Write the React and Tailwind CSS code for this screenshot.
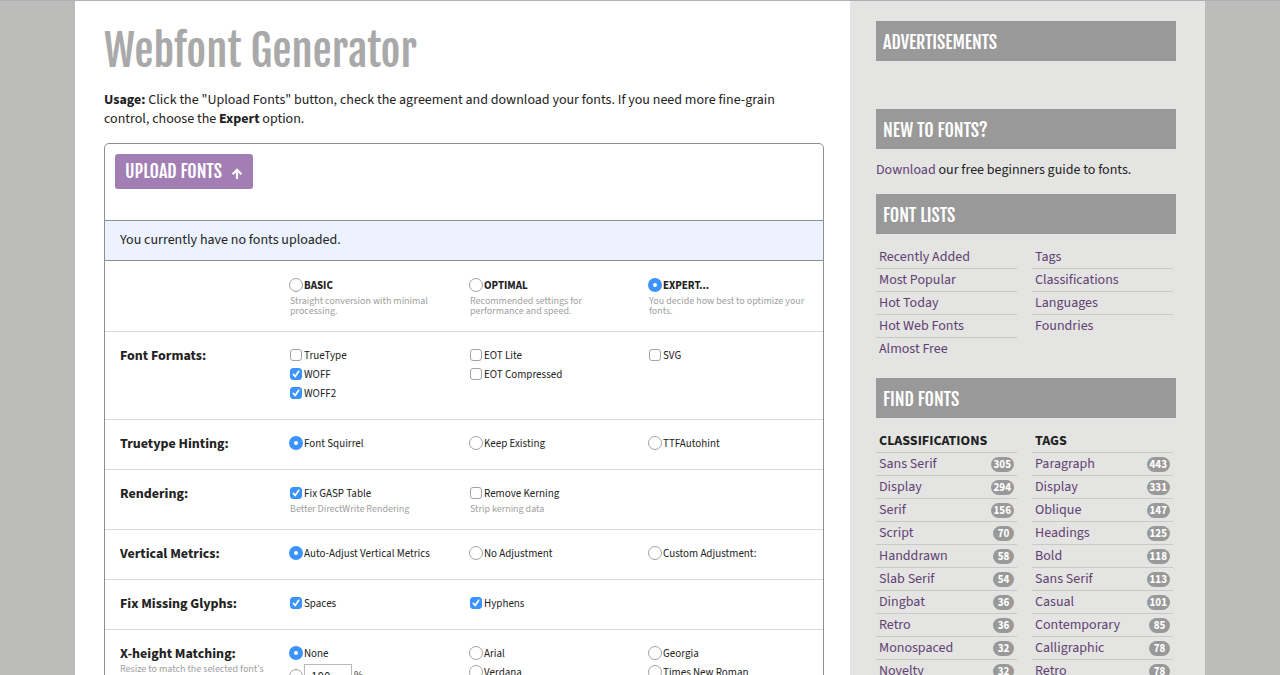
import { useState } from "react";

const control =
  "col-start-1 row-start-1 m-0 appearance-none border border-[#a3a3a3] bg-white checked:border-[#3b94fb]";

function Option({ type = "checkbox", name, label, note, checked = false, strong = false }) {
  return (
    <div>
      <label className="flex h-[19px] items-center">
        <span className="grid w-3.5 shrink-0 place-items-center">
          {type === "radio" ? (
            <input
              type="radio"
              name={name}
              defaultChecked={checked}
              className={`${control} size-3.5 rounded-full checked:border-[5px]`}
            />
          ) : (
            <>
              <input
                type="checkbox"
                name={name}
                defaultChecked={checked}
                className={`${control} peer size-3 rounded-[3px] checked:bg-[#3b94fb]`}
              />
              <svg
                viewBox="0 0 12 12"
                className="pointer-events-none col-start-1 row-start-1 hidden size-3 peer-checked:block"
                fill="none"
                stroke="white"
                strokeWidth="1.7"
                strokeLinecap="round"
                strokeLinejoin="round"
              >
                <path d="M3.4 6.4 5.2 8.5 8.7 3.3" />
              </svg>
            </>
          )}
        </span>
        <span className={strong ? "ml-px pt-[3px] text-[11px] font-bold" : "ml-px pt-[3px] text-[11px]"}>
          {label}
        </span>
      </label>
      {note && <Note className="-mb-0.5 ml-px max-w-[160px]">{note}</Note>}
    </div>
  );
}

function Note({ children, className = "" }) {
  return <p className={`mt-0.5 text-[10px] leading-[10px] text-[#a0a0a0] ${className}`}>{children}</p>;
}

function Row({ title, note, children, first = false }) {
  return (
    <fieldset
      className={`grid grid-cols-[169fr_180fr_179fr_160fr] px-[15px] pb-[17px] ${
        first ? "pt-3.5" : "border-t border-[#d9d9d9] pt-[13px]"
      }`}
    >
      <div>
        {title && <h2 className="h-[19px] pt-0.5 text-[14px] font-bold leading-[19px]">{title}</h2>}
        {note && <Note className="max-w-[150px]">{note}</Note>}
      </div>
      {children}
    </fieldset>
  );
}

function PercentOption() {
  const [value, setValue] = useState("100");
  return (
    <div className="mt-0.5 flex h-6 items-center">
      <input
        type="radio"
        name="xheight"
        aria-label="Custom percentage"
        className={`${control} size-3.5 rounded-full checked:border-[5px]`}
      />
      <input
        type="text"
        aria-label="Percentage"
        value={value}
        onChange={(e) => setValue(e.target.value)}
        className="ml-px h-6 w-12 border border-[#b8b8b8] bg-white px-1.5 pt-0.5 text-[13px]"
      />
      <span className="ml-0.5 text-[11px]">%</span>
    </div>
  );
}

function BarHeading({ children, className = "" }) {
  return (
    <h2
      className={`flex h-10 items-center bg-[#999] px-[7px] pt-0.5 font-['Fjalla_One','Roboto_Condensed',sans-serif] text-lg font-normal uppercase text-white ${className}`}
    >
      {children}
    </h2>
  );
}

function LinkList({ title, items }) {
  return (
    <div className="min-w-0 flex-1">
      {title && (
        <h3 className="h-[23px] border-b border-[#c9c9c9] px-[3px] text-[14px] font-bold uppercase leading-[22px]">
          {title}
        </h3>
      )}
      <ul className="divide-y divide-[#c9c9c9]">
        {items.map(([label, count]) => (
          <li key={label} className="flex h-[23px] items-center justify-between px-[3px] last:h-[22px]">
            <a href="#" className="text-[14px] leading-[22px] text-[#5f4272]">
              {label}
            </a>
            {count && (
              <span className="h-[15px] min-w-[21px] rounded-full bg-[#999] px-[3px] text-center text-[11px] font-bold leading-[15px] text-white">
                {count}
              </span>
            )}
          </li>
        ))}
      </ul>
    </div>
  );
}

const lists = [["Recently Added"], ["Most Popular"], ["Hot Today"], ["Hot Web Fonts"], ["Almost Free"]];
const browse = [["Tags"], ["Classifications"], ["Languages"], ["Foundries"]];
const classifications = [
  ["Sans Serif", 305],
  ["Display", 294],
  ["Serif", 156],
  ["Script", 70],
  ["Handdrawn", 58],
  ["Slab Serif", 54],
  ["Dingbat", 36],
  ["Retro", 36],
  ["Monospaced", 32],
  ["Novelty", 32],
];
const tags = [
  ["Paragraph", 443],
  ["Display", 331],
  ["Oblique", 147],
  ["Headings", 125],
  ["Bold", 118],
  ["Sans Serif", 113],
  ["Casual", 101],
  ["Contemporary", 85],
  ["Calligraphic", 78],
  ["Retro", 78],
];

export default function App() {
  return (
    <div className="min-h-screen border-t border-[#b0b0b4] bg-[#bcbcba] font-['Source_Sans_3','Noto_Sans_CJK_SC',sans-serif] text-[14px] text-[#222]">
      <div className="mx-auto flex min-h-screen max-w-[1130px]">
        <main className="min-w-0 flex-1 bg-white pl-[29px] pr-[26px] pt-5">
          <h1 className="font-['Fjalla_One','Roboto_Condensed',sans-serif] text-[43px] font-normal leading-[60px] text-[#a9a9a9]">
            Webfont Generator
          </h1>
          <p className="mt-2.5 pr-5 leading-[19px]">
            <strong>Usage:</strong> Click the "Upload Fonts" button, check the agreement and download your fonts. If
            you need more fine-grain control, choose the <strong>Expert</strong> option.
          </p>
          <form className="mt-3.5 rounded-t-[5px] border border-[#8f8f8f]">
            <div className="h-[76px] p-2.5">
              <button
                type="button"
                className="flex h-[35px] items-center gap-[9px] rounded-[3px] bg-[#a27eb4] px-2.5 pb-0.5 font-['Fjalla_One','Roboto_Condensed',sans-serif] text-lg uppercase text-white"
              >
                Upload Fonts
                <svg
                  viewBox="0 0 12 14"
                  className="mt-1 h-3.5 w-3"
                  fill="none"
                  stroke="currentColor"
                  strokeWidth="2.2"
                >
                  <path d="M6 13V4M1.6 8.2 6 3.8l4.4 4.4" />
                </svg>
              </button>
            </div>
            <p className="h-[41px] border-y border-[#8f8f8f] bg-[#ecf2ff] px-[15px] leading-[38px]">
              You currently have no fonts uploaded.
            </p>
            <Row first>
              <Option type="radio" name="mode" strong label="BASIC" note="Straight conversion with minimal processing." />
              <Option
                type="radio"
                name="mode"
                strong
                label="OPTIMAL"
                note="Recommended settings for performance and speed."
              />
              <Option
                type="radio"
                name="mode"
                strong
                checked
                label="EXPERT..."
                note="You decide how best to optimize your fonts."
              />
            </Row>
            <Row title="Font Formats:">
              <div>
                <Option name="ttf" label="TrueType" />
                <Option name="woff" label="WOFF" checked />
                <Option name="woff2" label="WOFF2" checked />
              </div>
              <div>
                <Option name="eot" label="EOT Lite" />
                <Option name="eotz" label="EOT Compressed" />
              </div>
              <Option name="svg" label="SVG" />
            </Row>
            <Row title="Truetype Hinting:">
              <Option type="radio" name="hinting" label="Font Squirrel" checked />
              <Option type="radio" name="hinting" label="Keep Existing" />
              <Option type="radio" name="hinting" label="TTFAutohint" />
            </Row>
            <Row title="Rendering:">
              <Option name="gasp" label="Fix GASP Table" note="Better DirectWrite Rendering" checked />
              <Option name="kerning" label="Remove Kerning" note="Strip kerning data" />
            </Row>
            <Row title="Vertical Metrics:">
              <Option type="radio" name="metrics" label="Auto-Adjust Vertical Metrics" checked />
              <Option type="radio" name="metrics" label="No Adjustment" />
              <Option type="radio" name="metrics" label="Custom Adjustment:" />
            </Row>
            <Row title="Fix Missing Glyphs:">
              <Option name="spaces" label="Spaces" checked />
              <Option name="hyphens" label="Hyphens" checked />
            </Row>
            <Row title="X-height Matching:" note="Resize to match the selected font's x-height">
              <div>
                <Option type="radio" name="xheight" label="None" checked />
                <PercentOption />
              </div>
              <div>
                <Option type="radio" name="xheight" label="Arial" />
                <Option type="radio" name="xheight" label="Verdana" />
              </div>
              <div>
                <Option type="radio" name="xheight" label="Georgia" />
                <Option type="radio" name="xheight" label="Times New Roman" />
              </div>
            </Row>
          </form>
        </main>

        <aside className="w-[355px] shrink-0 bg-[#e4e4e2] pl-[26px] pr-[29px] pt-5">
          <BarHeading>Advertisements</BarHeading>
          <BarHeading className="mt-12">New to Fonts?</BarHeading>
          <p className="mt-[11px] leading-[20px]">
            <a href="#" className="text-[#5f4272]">
              Download
            </a>{" "}
            our free beginners guide to fonts.
          </p>
          <BarHeading className="mt-3.5">Font Lists</BarHeading>
          <div className="mt-3 flex gap-[15px] pr-[3px]">
            <LinkList items={lists} />
            <LinkList items={browse} />
          </div>
          <BarHeading className="mt-[18px]">Find Fonts</BarHeading>
          <div className="mt-3 flex gap-[15px] pr-[3px]">
            <LinkList title="Classifications" items={classifications} />
            <LinkList title="Tags" items={tags} />
          </div>
        </aside>
      </div>
    </div>
  );
}
